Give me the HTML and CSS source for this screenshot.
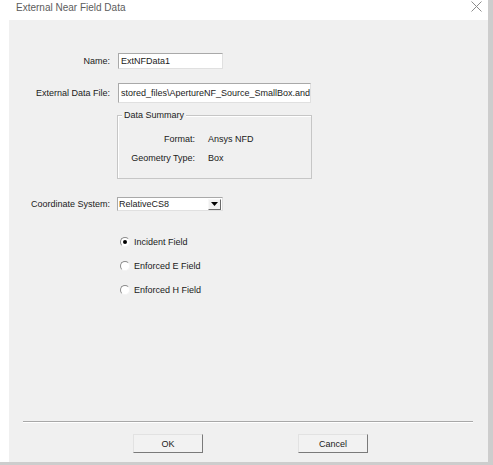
FILE: index.html
```html
<!DOCTYPE html>
<html>
<head>
<meta charset="utf-8">
<title>External Near Field Data</title>
<link rel="stylesheet" href="styles.css">
</head>
<body>
<div class="window">
  <div class="frame">
    <div class="titlebar">
      <span class="title">External Near Field Data</span>
      <svg class="close" width="11" height="11" viewBox="0 0 11 11"><path d="M0.5 0.5 L10.5 10.5 M10.5 0.5 L0.5 10.5" stroke="#8c8c8c" stroke-width="1" fill="none"/></svg>
    </div>
    <div class="main">
      <div class="gutter"></div>
      <div class="dialog">
        <div class="form">
          <div class="row row-name">
            <span class="label">Name:</span>
            <div class="input input-name">ExtNFData1</div>
          </div>
          <div class="row row-file">
            <span class="label">External Data File:</span>
            <div class="input input-file">stored_files\ApertureNF_Source_SmallBox.and</div>
          </div>
          <div class="group">
            <span class="group-title">Data Summary</span>
            <div class="summary">
              <span class="s-label">Format:</span><span class="s-value">Ansys NFD</span>
              <span class="s-label">Geometry Type:</span><span class="s-value">Box</span>
            </div>
          </div>
          <div class="row row-coord">
            <span class="label">Coordinate System:</span>
            <div class="select">
              <span class="select-text">RelativeCS8</span>
              <span class="select-btn"><svg width="7" height="4" viewBox="0 0 7 4"><path d="M0 0 H7 L3.5 4 Z" fill="#000"/></svg></span>
            </div>
          </div>
          <div class="radios">
            <div class="radio-row"><span class="radio checked"></span><span>Incident Field</span></div>
            <div class="radio-row"><span class="radio"></span><span>Enforced E Field</span></div>
            <div class="radio-row"><span class="radio"></span><span>Enforced H Field</span></div>
          </div>
        </div>
        <div class="footer">
          <div class="separator"></div>
          <div class="buttons">
            <button class="btn btn-ok">OK</button>
            <button class="btn btn-cancel">Cancel</button>
          </div>
        </div>
      </div>
    </div>
    <div class="bottom-strip"></div>
  </div>
  <div class="right-strip"></div>
</div>
</body>
</html>
```
FILE: styles.css
```css
html, body {
  margin: 0;
  padding: 0;
  width: 493px;
  height: 465px;
  overflow: hidden;
  background: #ffffff;
}
.window {
  display: flex;
  width: 493px;
  height: 465px;
  font-family: "Liberation Sans", Arial, sans-serif;
  font-size: 9px;
  color: #1a1a1a;
}
.frame {
  width: 488px;
  display: flex;
  flex-direction: column;
}
.right-strip {
  width: 5px;
  background: #cdcdcd;
}
.titlebar {
  height: 20px;
  display: flex;
  align-items: flex-start;
  justify-content: space-between;
  background: #ffffff;
}
.title {
  font-size: 10px;
  color: #5c5c5c;
  margin-left: 16px;
  margin-top: 2px;
  line-height: 11px;
}
.close {
  margin-top: 1px;
  margin-right: 6px;
}
.main {
  flex: 1;
  display: flex;
}
.gutter {
  width: 9px;
  background: #ffffff;
}
.dialog {
  flex: 1;
  background: #f0f0f0;
  display: flex;
  flex-direction: column;
}
.bottom-strip {
  height: 3px;
  background: #cdcdcd;
}
.form {
  padding-top: 33px;
  display: flex;
  flex-direction: column;
}
.row {
  display: flex;
  align-items: center;
}
.label {
  width: 101px;
  text-align: right;
  margin-right: 8px;
  white-space: nowrap;
}
.input {
  background: #ffffff;
  border: 1px solid #a9a9a9;
  border-right-color: #e0e0e0;
  border-bottom-color: #e0e0e0;
  box-sizing: border-box;
  padding-left: 2px;
  display: flex;
  align-items: center;
  white-space: nowrap;
  overflow: hidden;
}
.input-name {
  width: 105px;
  height: 16px;
}
.row-file {
  margin-top: 14px;
}
.input-file {
  width: 193px;
  height: 20px;
}
.group {
  position: relative;
  margin-top: 12px;
  margin-left: 108px;
  width: 195px;
  height: 64px;
  box-sizing: border-box;
  border: 1px solid #c6c6c6;
  box-shadow: inset 1px 1px 0 #ffffff;
}
.group-title {
  position: absolute;
  top: -7px;
  left: 4px;
  padding: 0 2px;
  background: #f0f0f0;
  line-height: 12px;
}
.summary {
  display: grid;
  grid-template-columns: 77px auto;
  column-gap: 13px;
  row-gap: 8px;
  padding-top: 18px;
  line-height: 11px;
}
.s-label {
  text-align: right;
  white-space: nowrap;
}
.row-coord {
  margin-top: 18px;
}
.select {
  display: flex;
  align-items: center;
  width: 106px;
  height: 14px;
  box-sizing: border-box;
  background: #ffffff;
  border: 1px solid #a9a9a9;
  border-right-color: #e0e0e0;
  border-bottom-color: #e0e0e0;
  margin-left: -1px;
}
.select-text {
  flex: 1;
  padding-left: 1px;
}
.select-btn {
  width: 13px;
  height: 11px;
  box-sizing: border-box;
  margin-right: 1px;
  background: #f0f0f0;
  border: 1px solid #f8f8f8;
  border-right-color: #6a6a6a;
  border-bottom-color: #6a6a6a;
  display: flex;
  align-items: center;
  justify-content: center;
}
.radios {
  margin-top: 19px;
  display: flex;
  flex-direction: column;
}
.radio-row {
  height: 24px;
  display: flex;
  align-items: center;
  padding-left: 111px;
}
.radio {
  width: 10px;
  height: 10px;
  box-sizing: border-box;
  border-radius: 50%;
  border: 1px solid;
  border-color: #8a8a8a #f4f4f4 #f4f4f4 #8a8a8a;
  background: #ffffff;
  margin-right: 4px;
  display: flex;
  align-items: center;
  justify-content: center;
}
.radio.checked::after {
  content: "";
  width: 4px;
  height: 4px;
  border-radius: 50%;
  background: #000000;
}
.footer {
  margin-top: auto;
  padding: 0 15px 9px 14px;
}
.separator {
  height: 1px;
  background: #a8a8a8;
  border-bottom: 1px solid #ffffff;
}
.buttons {
  margin-top: 11px;
  display: flex;
  padding-left: 110px;
  gap: 95px;
}
.btn {
  width: 70px;
  height: 19px;
  padding: 0;
  font-family: "Liberation Sans", Arial, sans-serif;
  font-size: 9px;
  color: #1a1a1a;
  background: #f2f2f2;
  border: 1px solid #e2e2e2;
  border-right-color: #7a7a7a;
  border-bottom-color: #7a7a7a;
  border-radius: 0;
}
```
